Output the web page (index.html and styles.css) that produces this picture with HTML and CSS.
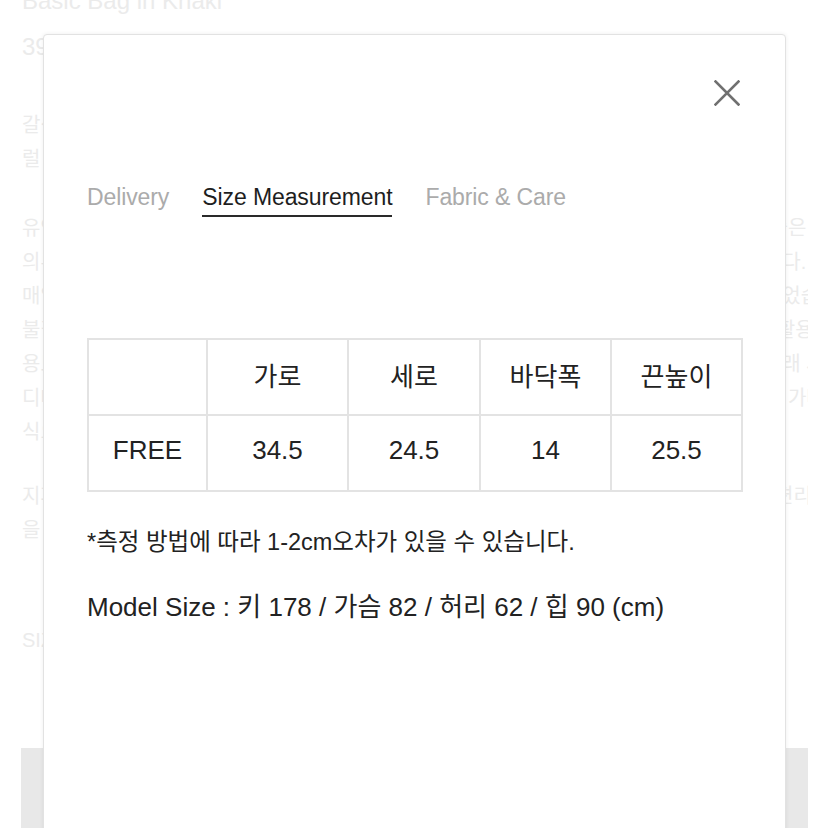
FILE: index.html
```html
<!DOCTYPE html>
<html lang="ko">
<head>
<meta charset="utf-8">
<title>Size Measurement</title>
<link rel="stylesheet" href="styles.css">
</head>
<body>
<div class="page">
  <h1 class="page-title">Basic Bag in Khaki</h1>
  <p class="page-price">39,000</p>
  <p class="page-text">
    <span class="line">갈색 톤의 카키 컬러가 돋보이는 데일리 백으로 어떤 스타일에도 잘 어울리는</span>
    <span class="line">럴 수 있는 넉넉한 수납 공간을 갖춘 베이직한 디자인입니다.</span>
  </p>
  <p class="page-text">
    <span class="line">유연하고 가벼운 소재를 사용하여 오래 들어도 부담이 없으며 다양한 의류와 함께 매치하기 좋은 아이템입니다. 또한 현</span>
    <span class="line">의류와 함께 매치하기 좋은 실용적인 사이즈로 노트북과 소지품을 넉넉하게 수납할 수 있습니다. 이는</span>
    <span class="line">매일 사용하기 좋은 실용적인 사이즈로 노트북과 소지품을 넉넉하게 수납할 수 있도록 제작되었습니다. 이</span>
    <span class="line">불필요한 장식을 덜어내어 깔끔한 실루엣을 완성하였으며 용도에 따라 숄더백과 토트백으로 활용 가능합니다 사</span>
    <span class="line">용도에 따라 숄더백과 토트백으로 활용 가능하며 디테일한 마감으로 완성도를 높였습니다. 오래 사용할 수 있는 비</span>
    <span class="line">디테일한 마감으로 완성도를 높였으며 오래 사용할 수 있도록 튼튼한 소재로 제작되었습니다. 가벼운 소재로 상</span>
    <span class="line">식으로 제작되었습니다.</span>
  </p>
  <p class="page-text">
    <span class="line">지퍼 여밈으로 소지품을 안전하게 보관할 수 있으며 내부 포켓이 있어 작은 소품을 정리하기 편리합니다. 또한 내</span>
    <span class="line">을 정리하기 편리합니다.</span>
  </p>
  <p class="page-sub">SIZE</p>
  <div class="page-button"></div>
</div>

<div class="modal">
  <div class="close-row">
    <svg class="close-icon" width="26" height="26" viewBox="0 0 26 26" aria-label="close">
      <path d="M1.5 1.5 L24.5 24.5 M24.5 1.5 L1.5 24.5" stroke="#707070" stroke-width="2.6" stroke-linecap="square" fill="none"/>
    </svg>
  </div>
  <div class="tabs">
    <span class="tab">Delivery</span>
    <span class="tab tab-active">Size Measurement</span>
    <span class="tab">Fabric &amp; Care</span>
  </div>
  <table class="size-table">
    <colgroup>
      <col class="c1"><col class="c2"><col class="c3"><col class="c4"><col class="c5">
    </colgroup>
    <tr><td></td><td>가로</td><td>세로</td><td>바닥폭</td><td>끈높이</td></tr>
    <tr><td>FREE</td><td>34.5</td><td>24.5</td><td>14</td><td>25.5</td></tr>
  </table>
  <p class="note">*측정 방법에 따라 1-2cm오차가 있을 수 있습니다.</p>
  <p class="model">Model Size : 키 178 / 가슴 82 / 허리 62 / 힙 90 (cm)</p>
</div>
</body>
</html>
```
FILE: styles.css
```css
html, body {
  margin: 0;
  padding: 0;
  background: #fff;
  overflow: hidden;
  height: 828px;
}
body {
  font-family: "Liberation Sans", "Noto Sans CJK KR", sans-serif;
}
.page {
  padding: 0 20px 0 22px;
  color: #ebebeb;
}
.page-title {
  margin: -14px 0 0 0;
  font-size: 24px;
  font-weight: 400;
  line-height: 30px;
  white-space: nowrap;
}
.page-price {
  margin: 16px 0 0 0;
  font-size: 24px;
  line-height: 30px;
}
.page-text {
  margin: 46px 0 0 0;
  font-size: 20px;
  line-height: 34px;
}
.page-text + .page-text {
  margin-top: 35px;
}
.page-text + .page-text + .page-text {
  margin-top: 30px;
}
.line {
  display: block;
  white-space: nowrap;
  overflow: hidden;
}
.page-sub {
  margin: 76px 0 0 0;
  font-size: 20px;
  line-height: 34px;
}
.page-button {
  margin: 91px 0 0 -1px;
  height: 100px;
  background: #e8e8e8;
}

.modal {
  position: absolute;
  left: 43px;
  top: 34px;
  width: 743px;
  height: 830px;
  box-sizing: border-box;
  background: #fff;
  border: 1px solid #e2e2e2;
  border-radius: 4px;
  box-shadow: 0 0 4px rgba(0, 0, 0, 0.07);
  padding: 45px 45px 0 43px;
}
.close-row {
  display: flex;
  justify-content: flex-end;
  height: 26px;
}
.close-icon {
  display: block;
}
.tabs {
  display: flex;
  gap: 33px;
  margin-top: 78px;
}
.tab {
  font-size: 23px;
  line-height: 26px;
  color: #ababab;
  padding-bottom: 5px;
  letter-spacing: -0.1px;
}
.tab-active {
  color: #1e1e1e;
  border-bottom: 2px solid #2a2a2a;
}
.size-table {
  margin-top: 121px;
  width: 655px;
  border-collapse: collapse;
  table-layout: fixed;
  border: 2px solid #e3e3e3;
}
.c1 { width: 119px; }
.c2 { width: 141px; }
.c3 { width: 132px; }
.c4 { width: 131px; }
.c5 { width: 131px; }
.size-table td {
  border: 2px solid #e3e3e3;
  height: 68px;
  padding: 0 0 6px 0;
  text-align: center;
  font-size: 26px;
  color: #222;
}
.note {
  margin: 36px 0 0 0;
  font-size: 23.5px;
  line-height: 28px;
  color: #222;
}
.model {
  margin: 36px 0 0 0;
  font-size: 26px;
  line-height: 30px;
  color: #222;
}
```
